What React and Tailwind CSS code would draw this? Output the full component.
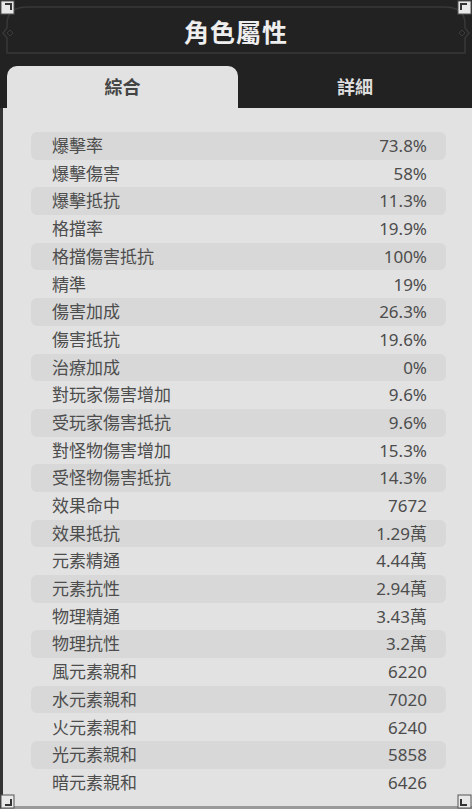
import React from 'react';

const stats = [
  ['爆擊率', '73.8%'],
  ['爆擊傷害', '58%'],
  ['爆擊抵抗', '11.3%'],
  ['格擋率', '19.9%'],
  ['格擋傷害抵抗', '100%'],
  ['精準', '19%'],
  ['傷害加成', '26.3%'],
  ['傷害抵抗', '19.6%'],
  ['治療加成', '0%'],
  ['對玩家傷害增加', '9.6%'],
  ['受玩家傷害抵抗', '9.6%'],
  ['對怪物傷害增加', '15.3%'],
  ['受怪物傷害抵抗', '14.3%'],
  ['效果命中', '7672'],
  ['效果抵抗', '1.29萬'],
  ['元素精通', '4.44萬'],
  ['元素抗性', '2.94萬'],
  ['物理精通', '3.43萬'],
  ['物理抗性', '3.2萬'],
  ['風元素親和', '6220'],
  ['水元素親和', '7020'],
  ['火元素親和', '6240'],
  ['光元素親和', '5858'],
  ['暗元素親和', '6426'],
];

const Corner = ({ className }) => (
  <svg className={className} width="16" height="16" viewBox="0 0 16 16">
    <rect x="1" y="1" width="13" height="13" fill="#e8e8e8" stroke="#555" strokeWidth="1" />
    <path d="M5 4 H11 V10" fill="none" stroke="#333" strokeWidth="2" />
  </svg>
);

const App = () => {
  return (
    <div
      className="relative w-[472px] h-[809px] overflow-hidden bg-[#222222] flex flex-col"
      style={{ fontFamily: '"Noto Sans", "Noto Sans CJK TC", sans-serif' }}
    >
      {/* header ornament */}
      <svg className="absolute left-0 top-0 pointer-events-none" width="472" height="60" viewBox="0 0 472 60">
        <path
          d="M7 53 V38 L3 33 L7 28 V24 Q7 7 28 7 H444 Q465 7 465 24 V28 L469 33 L465 38 V53 Z"
          fill="none"
          stroke="#383838"
          strokeWidth="1.5"
        />
        <path d="M7 33 L10 30 L13 33 L10 36 Z" fill="none" stroke="#3c3c3c" strokeWidth="1" />
        <path d="M465 33 L462 30 L459 33 L462 36 Z" fill="none" stroke="#3c3c3c" strokeWidth="1" />
      </svg>

      <div className="h-[66px] flex items-center justify-center">
        <h1 className="text-[25px] font-bold text-[#eeeeee] tracking-[1px] leading-none mt-[-1px]">角色屬性</h1>
      </div>

      <div className="flex h-[42px] pl-[7px]">
        <div className="w-[231px] bg-[#e2e2e2] rounded-t-[10px] flex items-center justify-center">
          <span className="text-[18px] font-bold text-[#444444]">綜合</span>
        </div>
        <div className="flex-1 flex items-center justify-center">
          <span className="text-[18px] font-bold text-[#dddddd]">詳細</span>
        </div>
      </div>

      <div className="flex-1 bg-[#e2e2e2] border-l-[3px] border-[#333333] border-b-[3px] border-b-[#9a9a9a] pt-[24px] pl-[28px] pr-[26px]">
        {stats.map(([label, value], i) => (
          <div
            key={label}
            className={`h-[27.7px] flex items-center justify-between pl-[21px] pr-[19px] rounded-[6px] text-[17px] text-[#4d4d4d] ${
              i % 2 === 0 ? 'bg-[#d8d8d8]' : ''
            }`}
          >
            <span>{label}</span>
            <span>{value}</span>
          </div>
        ))}
      </div>

      <Corner className="absolute left-0 top-0" />
      <Corner className="absolute right-0 top-0 -scale-x-100" />
      <Corner className="absolute left-0 bottom-0 -scale-y-100" />
      <Corner className="absolute right-0 bottom-0 -scale-x-100 -scale-y-100" />
    </div>
  );
};

export default App;
